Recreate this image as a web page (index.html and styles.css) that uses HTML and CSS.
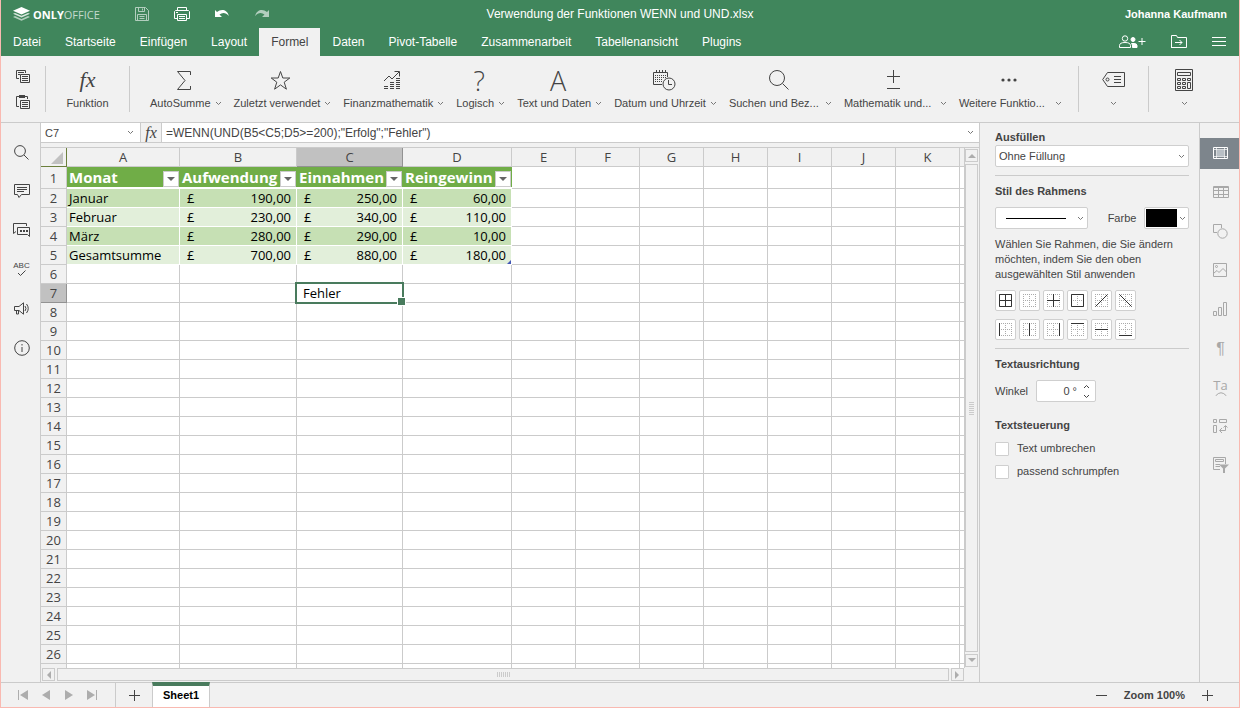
FILE: index.html
```html
<!DOCTYPE html>
<html lang="de">

<head>
  <meta charset="UTF-8">
  <meta name="viewport" content="width=device-width, initial-scale=1.0">
  <title>Verwendung der Funktionen WENN und UND.xlsx</title>
  <link rel="stylesheet" href="styles.css">
</head>

<body>
  <svg width="0" height="0" class="sprite">
    <symbol id="chevron" viewBox="0 0 7 5"><path d="M1 1l2.500 2.500L6 1" fill="none" stroke="currentColor"/></symbol>
    <symbol id="dots" viewBox="0 0 13 13"><path d="M.5 0v13M12.500 0v13M0 .5h13M0 12.500h13M6.500 0v13M0 6.500h13" fill="none" stroke="#aaa" stroke-dasharray="1 1"/></symbol>
  </svg>

  <header>
    <div class="title-bar">
      <div class="title-left">
        <a class="logo" href="#">
          <svg width="17" height="14" viewBox="0 0 17 14" fill="#fff"><path d="M8.500 0L17 3.700 8.500 7.500 0 3.700z"/><path opacity=".8" d="M0 6.800l2-.9 6.500 2.900L15 5.900l2 .9-8.500 3.800z"/><path opacity=".6" d="M0 10l2-.9L8.500 12 15 9.100l2 .9-8.500 3.800z"/></svg>
          <span><b>ONLY</b>OFFICE</span>
        </a>
        <div class="quick">
          <button class="icon-btn faded" aria-label="Speichern"><svg width="14" height="14" viewBox="0 0 14 14" fill="none" stroke="#fff"><path d="M.5.5h10l3 3v10H.5zM3.500.5v4h6v-4M7.500 1.500v2M2.500 13.500v-6h9v6M4.500 9.500h5M4.500 11.500h5"/></svg></button>
          <button class="icon-btn" aria-label="Drucken"><svg width="16" height="14" viewBox="0 0 16 14" fill="none" stroke="#fff"><path d="M3.500 3.500v-3h9v3M3.500 11.500h-3v-7l1-1h13l1 1v7h-3M3.500 7.500h9v6h-9zM5 9.500h6M5 11.500h6M2 5.500h2"/></svg></button>
          <button class="icon-btn" aria-label="Rückgängig"><svg width="16" height="10" viewBox="0 0 16 10" fill="#fff"><path d="M1 1l2 2C7-.5 13 0 15 7 12 3.500 8.500 3 5.500 5.500L8 8H1z"/></svg></button>
          <button class="icon-btn faded" aria-label="Wiederholen"><svg width="16" height="10" viewBox="0 0 16 10" fill="#fff"><path d="M15 1l-2 2C9-.5 3 0 1 7c3-3.500 6.500-4 9.500-1.500L8 8h7z"/></svg></button>
        </div>
      </div>
      <span class="doc-name">Verwendung der Funktionen WENN und UND.xlsx</span>
      <span class="user-name">Johanna Kaufmann</span>
    </div>
    <div class="tab-bar">
      <nav>
        <a href="#">Datei</a>
        <a href="#">Startseite</a>
        <a href="#">Einfügen</a>
        <a href="#">Layout</a>
        <a href="#" class="active">Formel</a>
        <a href="#">Daten</a>
        <a href="#">Pivot-Tabelle</a>
        <a href="#">Zusammenarbeit</a>
        <a href="#">Tabellenansicht</a>
        <a href="#">Plugins</a>
      </nav>
      <div class="tab-actions">
        <button class="icon-btn" aria-label="Freigeben"><svg width="28" height="14" viewBox="0 0 28 14" fill="none" stroke="#fff"><circle cx="6" cy="3.500" r="2.700"/><path d="M.5 12.500v-2c0-2 2-3 5.500-3s5.500 1 5.500 3v2zM19.500 6.500h7M23 3v7"/><circle cx="14" cy="4.500" r="2" fill="#fff"/><path d="M13.500 12.500V10l-1-1.500H15q3 0 3 2v2z" fill="#fff"/></svg></button>
        <button class="icon-btn" aria-label="Ordner öffnen"><svg width="17" height="14" viewBox="0 0 17 14" fill="none" stroke="#fff"><path d="M.5 13V.5h5l1 2h9V12.500H.5M4 7.500h7M8.500 5L11 7.500 8.500 10"/></svg></button>
        <button class="icon-btn" aria-label="Menü"><svg width="14" height="10" viewBox="0 0 14 10" stroke="#fff"><path d="M0 .5h14M0 4.500h14M0 8.500h14"/></svg></button>
      </div>
    </div>
  </header>

  <div class="toolbar">
    <div class="clipboard">
      <button class="icon-btn" aria-label="Kopieren"><svg width="14" height="14" viewBox="0 0 14 14" fill="none" stroke="#444"><path d="M3 8.500H.5v-8h9V3M2 2.500h6M2 4.500h2M4.500 4.500h9v8h-9zM6 6.500h6M6 8.500h6M6 10.500h6"/></svg></button>
      <button class="icon-btn" aria-label="Einfügen"><svg width="14" height="14" viewBox="0 0 14 14" fill="none" stroke="#444"><path d="M3 11.500H.5v-10H3M9 1.500h2.500V4M4.500 5.500h9v8h-9zM6 7.500h6M6 9.500h6M6 11.500h6"/><path d="M3 0h6v3H3z" fill="#444" stroke="none"/></svg></button>
    </div>
    <div class="group single">
      <button class="tool"><span class="tool-icon fx">fx</span><span class="tool-label">Funktion</span></button>
    </div>
    <div class="group functions">
      <button class="tool"><span class="tool-icon"><svg width="16" height="19" viewBox="0 0 16 19" fill="none" stroke="#444"><path d="M14.500 4V.5H1.500L9 9.500l-7.500 9h13V15"/></svg></span><span class="tool-label">AutoSumme<svg class="chevron"><use href="#chevron"/></svg></span></button>
      <button class="tool"><span class="tool-icon"><svg width="21" height="21" viewBox="0 0 21 21" fill="none" stroke="#444"><path d="M10.500 1.500l2.300 6.500h7l-5.600 4.200 2.200 7-5.900-4.300-5.900 4.300 2.200-7L1.200 8h7z"/></svg></span><span class="tool-label">Zuletzt verwendet<svg class="chevron"><use href="#chevron"/></svg></span></button>
      <button class="tool"><span class="tool-icon"><svg width="18" height="20" viewBox="0 0 18 20" fill="none" stroke="#444"><path d="M1 11l5-5 3 3 7-7M11.500 1.500h5v5M1 16.500h4M1 18.500h4M7 12.500h4M7 14.500h4M7 16.500h4M7 18.500h4M13 8.500h4M13 10.500h4M13 12.500h4M13 14.500h4M13 16.500h4M13 18.500h4"/></svg></span><span class="tool-label">Finanzmathematik<svg class="chevron"><use href="#chevron"/></svg></span></button>
      <button class="tool"><span class="tool-icon letter">?</span><span class="tool-label">Logisch<svg class="chevron"><use href="#chevron"/></svg></span></button>
      <button class="tool"><span class="tool-icon letter">A</span><span class="tool-label">Text und Daten<svg class="chevron"><use href="#chevron"/></svg></span></button>
      <button class="tool"><span class="tool-icon"><svg width="23" height="21" viewBox="0 0 23 21" fill="none" stroke="#444"><path d="M9 14.500H.5v-12h14V7M3.500 0v3M6.500 0v3M9.500 0v3M12.500 0v3"/><path d="M2 5.500h11M2 7.500h11M2 9.500h8M2 11.500h7" stroke-dasharray="1 1"/><circle cx="16" cy="14" r="6"/><path d="M15.500 10v4.500H19"/></svg></span><span class="tool-label">Datum und Uhrzeit<svg class="chevron"><use href="#chevron"/></svg></span></button>
      <button class="tool"><span class="tool-icon"><svg width="22" height="22" viewBox="0 0 22 22" fill="none" stroke="#444"><circle cx="9" cy="9" r="7.500"/><path d="M14.500 14.500l6 6"/></svg></span><span class="tool-label"><span class="cut">Suchen und Bez...</span><svg class="chevron"><use href="#chevron"/></svg></span></button>
      <button class="tool"><span class="tool-icon"><svg width="13" height="20" viewBox="0 0 13 20" stroke="#444"><path d="M6.500 0v13M0 6.500h13M0 18.500h13"/></svg></span><span class="tool-label"><span class="cut">Mathematik und...</span><svg class="chevron"><use href="#chevron"/></svg></span></button>
      <button class="tool"><span class="tool-icon"><svg width="16" height="4" viewBox="0 0 16 4" fill="#444"><circle cx="2" cy="2" r="1.600"/><circle cx="8" cy="2" r="1.600"/><circle cx="14" cy="2" r="1.600"/></svg></span><span class="tool-label"><span class="cut">Weitere Funktio...</span><svg class="chevron"><use href="#chevron"/></svg></span></button>
    </div>
    <div class="group narrow">
      <button class="tool" aria-label="Benannte Bereiche"><span class="tool-icon"><svg width="23" height="16" viewBox="0 0 23 16" fill="none" stroke="#444"><path d="M5.500.5h17v14h-17L.7 7.500zM12 4.500h7M12 7.500h7M12 10.500h7"/><circle cx="5.500" cy="7.500" r="1.500"/></svg></span><span class="tool-label"><svg class="chevron"><use href="#chevron"/></svg></span></button>
    </div>
    <div class="group narrow">
      <button class="tool" aria-label="Berechnung"><span class="tool-icon"><svg width="18" height="22" viewBox="0 0 18 22" fill="none" stroke="#444"><path d="M.5.5h17v21H.5zM2.500 3.500h13v3h-13zM2.500 9.500h3v2h-3zM7.500 9.500h3v2h-3zM12.500 9.500h3v2h-3zM2.500 13.500h3v2h-3zM7.500 13.500h3v2h-3zM2.500 17.500h3v2h-3zM7.500 17.500h3v2h-3zM12.500 13.500h3v6h-3z"/></svg></span><span class="tool-label"><svg class="chevron"><use href="#chevron"/></svg></span></button>
    </div>
  </div>

  <main>
    <aside class="left-menu">
      <button aria-label="Suchen"><svg width="15" height="15" viewBox="0 0 15 15" fill="none" stroke="#444"><circle cx="6" cy="6" r="5.400"/><path d="M10 10l4.500 4.500"/></svg></button>
      <button aria-label="Kommentare"><svg width="16" height="15" viewBox="0 0 16 15" fill="none" stroke="#444"><path d="M.5.5h15v10h-8L5 13.500l-1.500-3h-3zM3 3.500h10M3 5.500h10M3 7.500h7"/></svg></button>
      <button aria-label="Chat"><svg width="17" height="15" viewBox="0 0 17 15" fill="none" stroke="#444"><path d="M3 8.500l-2.500 2V.5h13V3M4.500 4.500h12v9l-2-2h-10z"/><path d="M7 8h2M10 8h2M13 8h2" stroke-width="2"/></svg></button>
      <button class="spell" aria-label="Rechtschreibprüfung"><span>ABC</span><svg width="9" height="7" viewBox="0 0 9 7" fill="none" stroke="#444"><path d="M1 3l2.500 2.500L8.500.5"/></svg></button>
      <button aria-label="Feedback"><svg width="16" height="13" viewBox="0 0 16 13" fill="none" stroke="#444"><path d="M.5 4.500H5L9.500.8v11.400L5 8.500H.5zM2.500 8.500v3.500h2V8.500M11 4q2 2.500 0 5M12.500 2q3.500 4.500 0 9"/></svg></button>
      <button aria-label="Über"><svg width="16" height="16" viewBox="0 0 16 16" fill="none" stroke="#444"><circle cx="8" cy="8" r="7.300"/><path d="M8 4v1.500M8 7v5"/></svg></button>
    </aside>

    <section class="editor">
      <div class="formula-bar">
        <div class="field name-box">
          <input type="text" value="C7" aria-label="Namensfeld">
          <svg class="chevron"><use href="#chevron"/></svg>
        </div>
        <button class="fx" aria-label="Funktion einfügen">fx</button>
        <div class="field formula">
          <input type="text" value="=WENN(UND(B5&lt;C5;D5&gt;=200);&quot;Erfolg&quot;;&quot;Fehler&quot;)" aria-label="Formel">
          <svg class="chevron"><use href="#chevron"/></svg>
        </div>
      </div>
      <div class="sheet-area">
        <div class="sheet">
          <table id="grid">
            <colgroup><col class="c-num"><col class="c-a"><col class="c-b"><col class="c-c"><col class="c-d"><col span="7" class="c-std"><col></colgroup>
          </table>
        </div>
        <div class="scroll-v">
          <button aria-label="Nach oben"><svg width="8" height="5" viewBox="0 0 8 5"><path d="M0 5l4-4 4 4z"/></svg></button>
          <div class="thumb"><i></i></div>
          <button aria-label="Nach unten"><svg width="8" height="5" viewBox="0 0 8 5"><path d="M0 0l4 4 4-4z"/></svg></button>
        </div>
        <div class="scroll-h">
          <button aria-label="Nach links"><svg width="5" height="8" viewBox="0 0 5 8"><path d="M5 0L1 4l4 4z"/></svg></button>
          <div class="thumb"><i></i></div>
          <button aria-label="Nach rechts"><svg width="5" height="8" viewBox="0 0 5 8"><path d="M0 0l4 4-4 4z"/></svg></button>
        </div>
      </div>
    </section>

    <aside class="settings">
      <label class="heading" for="fill">Ausfüllen</label>
      <div class="select">
        <select id="fill"><option>Ohne Füllung</option></select>
        <svg class="chevron"><use href="#chevron"/></svg>
      </div>
      <hr>
      <label class="heading border-heading" for="line-style">Stil des Rahmens</label>
      <div class="border-row">
        <div class="select line-select">
          <select id="line-style"><option></option></select>
          <svg class="chevron"><use href="#chevron"/></svg>
        </div>
        <label for="border-color">Farbe</label>
        <button id="border-color" class="color-btn"><span></span><svg class="chevron"><use href="#chevron"/></svg></button>
      </div>
      <p>Wählen Sie Rahmen, die Sie ändern möchten, indem Sie den oben ausgewählten Stil anwenden</p>
      <div class="borders" id="borders"></div>
      <hr>
      <h3>Textausrichtung</h3>
      <div class="angle">
        <label for="angle">Winkel</label>
        <div class="spinner">
          <input type="text" id="angle" value="0 °">
          <div class="arrows">
            <button class="up" aria-label="Mehr"><svg class="chevron"><use href="#chevron"/></svg></button>
            <button aria-label="Weniger"><svg class="chevron"><use href="#chevron"/></svg></button>
          </div>
        </div>
      </div>
      <h3>Textsteuerung</h3>
      <label class="check"><input type="checkbox">Text umbrechen</label>
      <label class="check"><input type="checkbox">passend schrumpfen</label>
    </aside>

    <aside class="right-menu">
      <button class="active" aria-label="Zelleneinstellungen"><svg width="15" height="13" viewBox="0 0 15 13" fill="none" stroke="#fff"><path d="M.5.5h14v11H.5z"/><path d="M3.500 1v10M11.500 1v10M1 2.500h13M1 9.500h13" opacity=".7"/><path d="M4 3h7v6H4z" fill="#b8bfc5" stroke="none"/></svg></button>
      <button aria-label="Tabelle"><svg width="16" height="13" viewBox="0 0 16 13" fill="none" stroke="#a8a8a8"><path d="M.5.5h15v11H.5zM0 1.500h16M0 4.500h16M0 8.500h16M5.500 2v10M10.500 2v10"/></svg></button>
      <button aria-label="Form"><svg width="15" height="15" viewBox="0 0 15 15" fill="none" stroke="#a8a8a8"><path d="M4 8.500H.5v-8h8V4"/><circle cx="9.500" cy="9.500" r="4.700"/></svg></button>
      <button aria-label="Bild"><svg width="15" height="15" viewBox="0 0 15 15" fill="none" stroke="#a8a8a8"><path d="M.5.5h13v13H.5zM1 10l3-2.500 2 2 4-4L13.500 9"/><circle cx="3.500" cy="3.500" r="1"/></svg></button>
      <button aria-label="Diagramm"><svg width="15" height="15" viewBox="0 0 15 15" fill="none" stroke="#a8a8a8"><path d="M.5 9.500h3v4h-3zM5.500 5.500h3v8h-3zM10.500.5h3v13h-3z"/></svg></button>
      <button class="para" aria-label="Absatz">¶</button>
      <button class="text-art" aria-label="TextArt"><span>Ta</span><svg width="12" height="4" viewBox="0 0 12 4" fill="none" stroke="#a8a8a8"><path d="M.5 4Q6-2.500 11.500 4"/></svg></button>
      <button aria-label="Pivot"><svg width="16" height="15" viewBox="0 0 16 15" fill="none" stroke="#a8a8a8"><path d="M.5.5h3v3h-3zM6.500.5h7v3h-7zM.5 6.500h3v7h-3zM7 11.500h5.500V7M9 9l-2.500 2.500L9 14M10.500 8.500l2-2 2 2"/></svg></button>
      <button aria-label="Datenschnitt"><svg width="16" height="17" viewBox="0 0 16 17" fill="none" stroke="#a8a8a8"><path d="M7 12.500H.5V.5h12V7M2.500 2.500h8v2h-8zM2.500 7.500H7M2.500 9.500H7"/><path d="M6 7.500h10l-4 4V16h-2v-4.500z" fill="#a8a8a8" stroke="none"/></svg></button>
    </aside>
  </main>

  <footer>
    <div class="sheet-nav">
      <button aria-label="Erstes Blatt"><svg width="10" height="10" viewBox="0 0 10 10"><path d="M0 0h1v10H0zM10 0v10L2 5z"/></svg></button>
      <button aria-label="Vorheriges Blatt"><svg width="8" height="10" viewBox="0 0 8 10"><path d="M8 0v10L0 5z"/></svg></button>
      <button aria-label="Nächstes Blatt"><svg width="8" height="10" viewBox="0 0 8 10"><path d="M0 0v10l8-5z"/></svg></button>
      <button aria-label="Letztes Blatt"><svg width="10" height="10" viewBox="0 0 10 10"><path d="M9 0h1v10H9zM0 0v10l8-5z"/></svg></button>
    </div>
    <button class="add-sheet" aria-label="Blatt hinzufügen"><svg width="11" height="11" viewBox="0 0 11 11" stroke="#444"><path d="M5.500 0v11M0 5.500h11"/></svg></button>
    <button class="sheet-tab">Sheet1</button>
    <div class="zoom">
      <button class="icon-btn" aria-label="Verkleinern"><svg width="11" height="11" viewBox="0 0 11 11" stroke="#444"><path d="M0 5.500h11"/></svg></button>
      <span>Zoom 100%</span>
      <button class="icon-btn" aria-label="Vergrößern"><svg width="11" height="11" viewBox="0 0 11 11" stroke="#444"><path d="M5.500 0v11M0 5.500h11"/></svg></button>
    </div>
  </footer>

  <script>
    const columns = ["A", "B", "C", "D", "E", "F", "G", "H", "I", "J", "K", ""];
    const data = {
      1: ["Monat", "Aufwendung", "Einnahmen", "Reingewinn"],
      2: ["Januar", "190,00", "250,00", "60,00"],
      3: ["Februar", "230,00", "340,00", "110,00"],
      4: ["März", "280,00", "290,00", "10,00"],
      5: ["Gesamtsumme", "700,00", "880,00", "180,00"],
      7: ["", "", "Fehler"]
    };
    const filter = '<button class="filter" aria-label="Filter"><svg width="8" height="4" viewBox="0 0 8 4"><path d="M0 0h8L4 4z"/></svg></button>';

    function cell(row, i) {
      const text = (data[row] && data[row][i]) || "";
      if (row === 1 && i < 4) return `<td class="title"><div><span>${text}</span>${filter}</div></td>`;
      if (row <= 5 && i < 4) {
        const band = row % 2 ? "light" : "dark";
        const last = row === 5 && i === 3 ? " last" : "";
        if (i === 0) return `<td class="${band}">${text}</td>`;
        return `<td class="${band}${last}"><div class="money"><span>£</span><span>${text}</span></div></td>`;
      }
      if (row === 7 && i === 2) return `<td class="selected">${text}</td>`;
      return `<td>${text}</td>`;
    }

    let html = '<thead><tr><th class="corner"><svg width="12" height="12" viewBox="0 0 12 12"><path d="M12 0v12H0z" fill="#c1c1c1"/></svg></th>';
    columns.forEach(c => html += `<th${c === "C" ? ' class="current"' : ""}>${c}</th>`);
    html += "</tr></thead><tbody>";
    for (let row = 1; row <= 27; row++) {
      html += `<tr><th${row === 7 ? ' class="current"' : ""}>${row}</th>`;
      html += columns.map((c, i) => cell(row, i)).join("") + "</tr>";
    }
    document.getElementById("grid").insertAdjacentHTML("beforeend", html + "</tbody>");

    // solid part of each border button, drawn over the dotted square
    const borderIcons = {
      "Alle": "M.5.5h12v12H.5zM6.500 0v13M0 6.500h13",
      "Keine": "",
      "Innen": "M6.500 0v13M0 6.500h13",
      "Außen": "M.5.5h12v12H.5z",
      "Diagonal aufwärts": "M.5 12.500l12-12",
      "Diagonal abwärts": "M.5.5l12 12",
      "Links": "M.5 0v13",
      "Vertikal": "M6.500 0v13",
      "Rechts": "M12.500 0v13",
      "Oben": "M0 .5h13",
      "Horizontal": "M0 6.500h13",
      "Unten": "M0 12.500h13"
    };
    document.getElementById("borders").innerHTML = Object.entries(borderIcons).map(([name, d]) =>
      `<button aria-label="${name}"><svg width="13" height="13" viewBox="0 0 13 13"><use href="#dots"/><path d="${d}" fill="none" stroke="#333"/></svg></button>`).join("");
  </script>
</body>

</html>
```
FILE: styles.css
```css
* {
  box-sizing: border-box;
}

body {
  margin: 0;
  height: 100vh;
  display: flex;
  flex-direction: column;
  border: 1px solid #f9b9b1;
  border-top: none;
  background-color: #f1f1f1;
  color: #444;
  font-family: "Liberation Sans", Arial, sans-serif;
  font-size: 11px;
  overflow: hidden;
}

.sprite {
  position: absolute;
}

button {
  display: flex;
  align-items: center;
  justify-content: center;
  margin: 0;
  padding: 0;
  border: none;
  background: none;
  color: inherit;
  font: inherit;
  cursor: pointer;
}

input,
select {
  font: inherit;
  color: inherit;
  outline: none;
}

.chevron {
  width: 7px;
  height: 5px;
  flex: none;
  color: #777;
}

.fx {
  font-family: "Liberation Serif", serif;
  font-style: italic;
}

/* header */
header {
  background-color: #40865c;
  color: #fff;
}

.title-bar {
  display: grid;
  grid-template-columns: 1fr auto 1fr;
  align-items: center;
  height: 28px;
  padding: 0 12px;
}

.title-left,
.quick,
.logo {
  display: flex;
  align-items: center;
}

.logo {
  gap: 3px;
  width: 109px;
  color: #c3dacd;
  font-family: "Open Sans", sans-serif;
  font-size: 11px;
  text-decoration: none;
}

.logo b {
  color: #fff;
}

.quick .icon-btn {
  width: 40px;
  height: 28px;
}

.faded {
  opacity: 0.6;
}

.doc-name {
  font-size: 12px;
}

.user-name {
  font-weight: bold;
  text-align: right;
}

.tab-bar {
  display: flex;
  justify-content: space-between;
  height: 28px;
}

nav {
  display: flex;
}

nav a {
  padding: 0 12px;
  color: #fff;
  font-size: 12px;
  line-height: 28px;
  text-decoration: none;
}

nav a.active {
  background-color: #f1f1f1;
  color: #444;
}

.tab-actions {
  display: flex;
  align-items: center;
  gap: 24px;
  padding-right: 13px;
}

/* toolbar */
.toolbar {
  display: flex;
  height: 67px;
  flex: none;
  padding: 10px 0;
  border-bottom: 1px solid #cbcbcb;
}

.clipboard {
  display: flex;
  flex-direction: column;
  justify-content: space-between;
  width: 44px;
  flex: none;
  padding: 4px 15px 3px;
}

.group {
  display: flex;
  justify-content: center;
  flex: none;
  border-left: 1px solid #cbcbcb;
}

.group.single {
  width: 84px;
}

.group.functions {
  flex: 1;
  justify-content: flex-start;
  gap: 12px;
  min-width: 0;
  padding-left: 20px;
}

.group.narrow {
  width: 70px;
}

.group.narrow:last-child {
  width: 91px;
  padding-right: 20px;
}

.tool {
  flex-direction: column;
  justify-content: flex-start;
  white-space: nowrap;
}

.tool-icon {
  display: flex;
  align-items: center;
  justify-content: center;
  height: 28px;
}

.functions .tool-icon {
  padding-right: 3px;
}

.tool-icon.fx {
  font-size: 22px;
}

.tool-icon.letter {
  font-family: "Open Sans", sans-serif;
  font-weight: 300;
  font-size: 27px;
}

.tool-label {
  display: flex;
  align-items: center;
  gap: 4px;
  height: 18px;
}

.cut {
  width: 92px;
  text-align: left;
}

/* work area */
main {
  flex: 1;
  display: flex;
  min-height: 0;
}

.left-menu,
.right-menu {
  display: flex;
  flex-direction: column;
  gap: 8px;
  width: 40px;
  padding-top: 15px;
  flex: none;
}

.left-menu {
  padding-top: 14px;
  border-right: 1px solid #cbcbcb;
}

.right-menu {
  border-left: 1px solid #cbcbcb;
}

.left-menu button,
.right-menu button {
  height: 31px;
  padding-left: 2px;
}

.right-menu .active {
  background-color: #7d858c;
}

.left-menu .spell,
.right-menu .text-art {
  flex-direction: column;
}

.spell span {
  font-size: 8px;
  line-height: 8px;
}

.right-menu .para,
.right-menu .text-art {
  color: #a8a8a8;
  font-size: 16px;
}

.text-art span {
  font-family: "Open Sans", sans-serif;
  font-size: 13px;
  line-height: 13px;
}

.editor {
  flex: 1;
  display: flex;
  flex-direction: column;
  min-width: 0;
}

.formula-bar {
  display: flex;
  height: 20px;
  flex: none;
  border-bottom: 1px solid #cbcbcb;
  background-color: #fff;
  margin-bottom: 4px;
}

.field {
  display: flex;
  align-items: center;
  padding-right: 5px;
}

.field input {
  flex: 1;
  min-width: 0;
  padding: 0 4px;
  border: none;
  background: none;
}

.name-box {
  width: 100px;
  padding-right: 6px;
  border-right: 1px solid #cbcbcb;
}

.formula-bar .fx {
  width: 21px;
  border-right: 1px solid #cbcbcb;
  background-color: #f1f1f1;
  font-size: 16px;
}

.formula {
  flex: 1;
  font-size: 12px;
}

.sheet-area {
  flex: 1;
  display: grid;
  grid-template-columns: minmax(0, 1fr) 14px;
  grid-template-rows: minmax(0, 1fr) 14px;
  min-height: 0;
  border-top: 1px solid #cbcbcb;
}

.sheet {
  overflow: hidden;
  background-color: #fff;
}

table {
  width: 100%;
  table-layout: fixed;
  border-spacing: 0;
  font-family: "Open Sans", sans-serif;
  font-size: 13px;
  line-height: 18px;
  color: #000;
}

.c-num {
  width: 26px;
}

.c-a {
  width: 113px;
}

.c-b {
  width: 117px;
}

.c-c {
  width: 106px;
}

.c-d {
  width: 109px;
}

.c-std {
  width: 64px;
}

th,
td {
  height: 19px;
  padding: 0;
  border-right: 1px solid #cbcbcb;
  border-bottom: 1px solid #cbcbcb;
  white-space: nowrap;
}

th {
  background-color: #f1f1f1;
  color: #444;
  font-weight: normal;
}

th.current {
  background-color: #c1c1c1;
  border-color: #929292;
}

th.corner {
  border-color: #6b7f3c;
  line-height: 0;
  text-align: right;
  padding: 2px 3px 0 0;
}

td {
  padding-left: 2px;
}

td.title {
  height: 22px;
  border-right: none;
  border-bottom: 2px solid #fff;
  background-color: #70ad47;
  color: #fff;
  font-size: 15px;
  font-weight: bold;
}

.title div {
  display: flex;
  align-items: center;
  justify-content: space-between;
  height: 20px;
  padding-right: 1px;
}

.filter {
  width: 16px;
  height: 16px;
  margin-top: 3px;
  border: 1px solid #cbcbcb;
  background-color: #fff;
  fill: #666;
}

td.dark,
td.light {
  border-color: #fff;
}

td.dark {
  background-color: #c6e0b4;
}

td.light {
  background-color: #e2efda;
}

.money {
  display: flex;
  justify-content: space-between;
  padding: 0 5px;
}

td.selected {
  position: relative;
  padding-left: 6px;
}

.selected::before {
  content: "";
  position: absolute;
  inset: -2px;
  border: 2px solid #497b5d;
}

.selected::after {
  content: "";
  position: absolute;
  right: -4px;
  bottom: -4px;
  width: 7px;
  height: 7px;
  border: 1px solid #fff;
  background-color: #497b5d;
}

td.last {
  position: relative;
}

/* table resize mark */
.last::after {
  content: "";
  position: absolute;
  right: 0;
  bottom: 0;
  border-left: 4px solid transparent;
  border-bottom: 4px solid #4257b5;
}

.scroll-v,
.scroll-h {
  display: flex;
  gap: 2px;
}

.scroll-v {
  flex-direction: column;
  padding: 1px 1px 1px 0;
}

.scroll-h {
  padding: 0 1px 1px 1px;
}

.scroll-v button,
.scroll-h button {
  width: 13px;
  height: 13px;
  flex: none;
  border: 1px solid #cbcbcb;
  fill: #adadad;
}

.thumb {
  flex: 1;
  display: flex;
  align-items: center;
  justify-content: center;
  border: 1px solid #cbcbcb;
}

.thumb i {
  width: 5px;
  height: 13px;
  background: repeating-linear-gradient(#cbcbcb 0 1px, transparent 1px 2px);
}

.scroll-h i {
  width: 13px;
  height: 5px;
  background: repeating-linear-gradient(90deg, #cbcbcb 0 1px, transparent 1px 2px);
}

/* cell settings */
.settings {
  width: 220px;
  flex: none;
  padding: 7px 10px 0 15px;
  border-left: 1px solid #cbcbcb;
  line-height: 15px;
}

.heading,
h3 {
  display: block;
  margin: 0;
  font-size: 11px;
  font-weight: bold;
}

.select {
  display: grid;
  align-items: center;
}

.select > * {
  grid-area: 1 / 1;
}

.select .chevron {
  justify-self: end;
  margin-right: 4px;
  pointer-events: none;
}

select {
  width: 100%;
  height: 22px;
  padding: 0 3px;
  appearance: none;
  border: 1px solid #cfcfcf;
  border-radius: 2px;
  background-color: #fff;
}

hr {
  margin: 8px 0;
  border: none;
  border-top: 1px solid #cbcbcb;
}

.border-row {
  display: flex;
  align-items: center;
  justify-content: space-between;
  margin: 8px 0;
}

.line-select {
  width: 93px;
}

.line-select select {
  background: #fff linear-gradient(#000, #000) 10px center / 60px 1px no-repeat;
}

.border-row label {
  margin-left: 12px;
}

.color-btn {
  justify-content: space-between;
  width: 45px;
  height: 22px;
  padding: 1px 2px 1px 1px;
  border: 1px solid #cfcfcf;
  border-radius: 2px;
  background-color: #fff;
}

.color-btn span {
  width: 31px;
  height: 18px;
  background-color: #000;
}

.settings p {
  margin: 0 0 8px;
}

.borders {
  display: grid;
  grid-template-columns: repeat(6, 21px);
  gap: 8px 3px;
}

.borders button {
  height: 21px;
  border: 1px solid #cfcfcf;
  border-radius: 2px;
  background-color: #fff;
}

.angle {
  display: flex;
  align-items: center;
  gap: 8px;
  margin: 8px 0 16px;
}

.spinner {
  display: flex;
  width: 60px;
  height: 22px;
  border: 1px solid #cfcfcf;
  border-radius: 2px;
  background-color: #fff;
}

.spinner input {
  flex: 1;
  min-width: 0;
  padding: 0;
  border: none;
  background: none;
  text-align: right;
}

.arrows {
  display: flex;
  flex-direction: column;
  justify-content: space-around;
  padding: 0 5px 0 6px;
}

.arrows .chevron {
  color: #444;
}

.up .chevron {
  transform: rotate(180deg);
}

.check {
  display: flex;
  align-items: center;
  gap: 8px;
  margin-top: 8px;
}

.check input {
  width: 14px;
  height: 14px;
  margin: 0;
  appearance: none;
  border: 1px solid #cfcfcf;
  border-radius: 1px;
  background-color: #fff;
}

/* status bar */
footer {
  display: flex;
  height: 25px;
  flex: none;
  border-top: 1px solid #cbcbcb;
  font-weight: bold;
}

.sheet-nav {
  display: flex;
  align-items: center;
  justify-content: space-between;
  width: 115px;
  padding: 0 18px 0 17px;
  border-right: 1px solid #cbcbcb;
  fill: #adadad;
}

.add-sheet {
  width: 36px;
}

.sheet-tab {
  width: 58px;
  margin-top: -1px;
  padding-bottom: 3px;
  border: 1px solid #cbcbcb;
  border-top: 4px solid #497b5d;
  border-bottom: none;
  background-color: #fff;
  color: #000;
}

.zoom {
  display: flex;
  align-items: center;
  gap: 17px;
  margin-left: auto;
  padding-right: 26px;
}
```
